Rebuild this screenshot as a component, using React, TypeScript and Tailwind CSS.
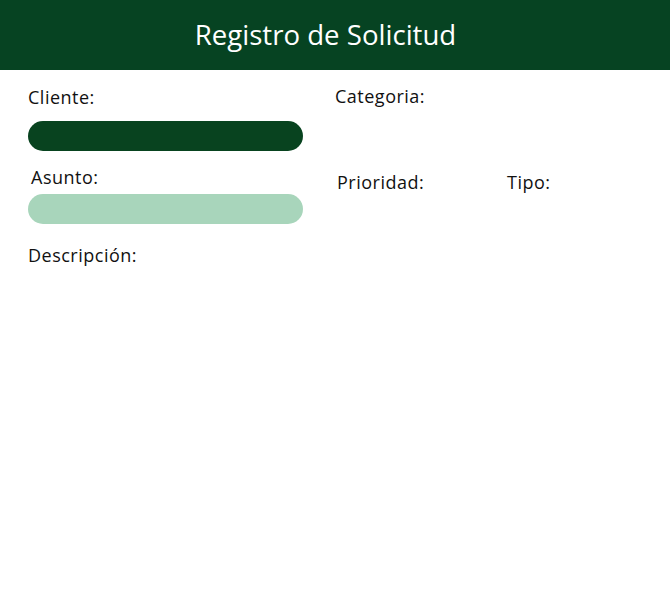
export default function App() {
  return (
    <div className="min-h-[590px] bg-white font-['Open_Sans',sans-serif] text-[#111]">
      <header className="h-[70px] bg-[#064322] flex items-center justify-center pr-[19px]">
        <h1 className="text-[27.6px] leading-none text-white">Registro de Solicitud</h1>
      </header>

      <div className="flex">
        <div className="ml-[28px] w-[275px] pt-[15px]">
          <div className="text-[18px] leading-[24px] tracking-[0.5px]">Cliente:</div>
          <div className="mt-[12px] h-[30px] rounded-full bg-[#08431f]" />
          <div className="mt-[14px] ml-[3px] text-[18px] leading-[24px] tracking-[0.5px]">Asunto:</div>
          <div className="mt-[5px] h-[30px] rounded-full bg-[#a8d5bb]" />
          <div className="mt-[19px] text-[18px] leading-[24px] tracking-[0.5px]">Descripción:</div>
        </div>

        <div className="ml-[32px] pt-[14px]">
          <div className="text-[18px] leading-[24px] tracking-[0.5px]">Categoria:</div>
          <div className="mt-[62px] ml-[2px] flex text-[18px] leading-[24px] tracking-[0.5px]">
            <span className="w-[170px]">Prioridad:</span>
            <span>Tipo:</span>
          </div>
        </div>
      </div>
    </div>
  );
}
